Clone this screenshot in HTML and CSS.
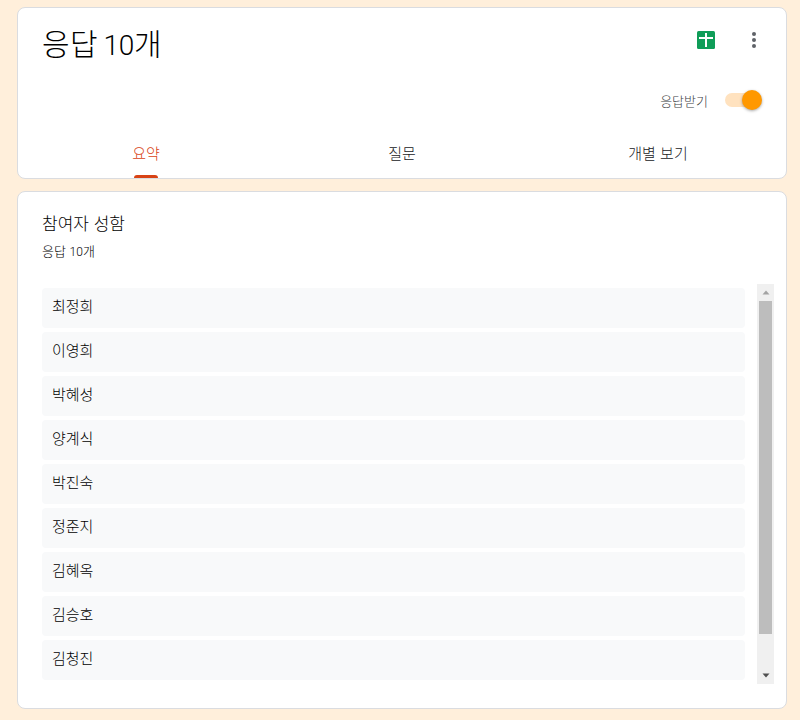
FILE: index.html
```html
<!DOCTYPE html>
<html lang="ko">
<head>
<meta charset="utf-8">
<title>응답</title>
<link rel="stylesheet" href="styles.css">
</head>
<body>
<main class="page">
  <section class="card head-card">
    <div class="head-top">
      <h1 class="title">응답 <span class="num">10</span>개</h1>
      <div class="actions">
        <svg class="sheet-icon" width="18" height="18" viewBox="0 0 18 18" aria-hidden="true">
          <rect width="18" height="18" rx="1.5" fill="#0f9d58"/>
          <rect x="2" y="6" width="14" height="2" fill="#fff"/>
          <rect x="8" y="2" width="2" height="14" fill="#fff"/>
        </svg>
        <svg class="more-icon" width="6" height="18" viewBox="0 0 6 18" aria-hidden="true">
          <circle cx="3" cy="3" r="2" fill="#5f6368"/>
          <circle cx="3" cy="9" r="2" fill="#5f6368"/>
          <circle cx="3" cy="15" r="2" fill="#5f6368"/>
        </svg>
      </div>
    </div>
    <div class="accept-row">
      <span class="accept-label">응답받기</span>
      <span class="switch"><span class="switch-knob"></span></span>
    </div>
    <nav class="tabs">
      <a class="tab tab-active">요약</a>
      <a class="tab">질문</a>
      <a class="tab">개별 보기</a>
    </nav>
  </section>
  <section class="card list-card">
    <h2 class="list-title">참여자 성함</h2>
    <p class="list-sub">응답 <span class="num">10</span>개</p>
    <div class="list-wrap">
      <ul class="names">
        <li class="name">최정희</li>
        <li class="name">이영희</li>
        <li class="name">박혜성</li>
        <li class="name">양계식</li>
        <li class="name">박진숙</li>
        <li class="name">정준지</li>
        <li class="name">김혜옥</li>
        <li class="name">김승호</li>
        <li class="name">김청진</li>
      </ul>
      <div class="scrollbar" aria-hidden="true">
        <div class="scroll-btn">
          <svg width="8" height="5" viewBox="0 0 8 5"><path d="M4 0.5L7.5 4.5H0.5z" fill="#a3a3a3"/></svg>
        </div>
        <div class="scroll-track"><div class="scroll-thumb"></div></div>
        <div class="scroll-btn">
          <svg width="8" height="5" viewBox="0 0 8 5"><path d="M4 4.5L7.5 0.5H0.5z" fill="#505050"/></svg>
        </div>
      </div>
    </div>
  </section>
</main>
</body>
</html>
```
FILE: styles.css
```css
* { box-sizing: border-box; }
html, body { margin: 0; height: 720px; overflow: hidden; }
body {
  background: #ffefdb;
  color: #000;
  font-family: "Noto Sans CJK KR", Roboto, sans-serif;
  font-weight: 300;
}
.num { font-family: Roboto, sans-serif; font-weight: 300; }
.page {
  display: flex;
  flex-direction: column;
  gap: 12px;
  padding: 7px 13px 0 17px;
}
.card {
  background: #fff;
  border: 1px solid #dadce0;
  border-radius: 8px;
}
.head-card {
  height: 172px;
  display: flex;
  flex-direction: column;
  overflow: hidden;
}
.head-top {
  display: flex;
  justify-content: space-between;
  padding: 14px 29px 0 24px;
  height: 78px;
}
.title {
  margin: 0;
  font-size: 30px;
  line-height: 40px;
  font-weight: 300;
  letter-spacing: .3px;
  word-spacing: -3px;
}
.title .num { font-size: 28px; letter-spacing: -.3px; }
.actions {
  display: flex;
  align-items: flex-start;
  gap: 36px;
  padding-top: 9px;
}
.accept-row {
  display: flex;
  align-items: center;
  justify-content: flex-end;
  gap: 17px;
  height: 28px;
  padding-right: 27px;
}
.accept-label {
  font-size: 13px;
  color: #3c4043;
}
.switch {
  position: relative;
  display: block;
  width: 34px;
  height: 14px;
  border-radius: 7px;
  background: #ffe2bf;
}
.switch-knob {
  position: absolute;
  top: -3px;
  right: -3px;
  width: 20px;
  height: 20px;
  border-radius: 50%;
  background: #ff9800;
  box-shadow: 0 1px 3px rgba(0,0,0,.35);
}
.tabs {
  display: grid;
  grid-template-columns: repeat(3, 1fr);
  margin-top: auto;
  height: 50px;
}
.tab {
  position: relative;
  text-align: center;
  font-size: 15px;
  line-height: 20px;
  padding-top: 15px;
  color: #202124;
}
.tab-active { color: #d84315; }
.tab-active::after {
  content: "";
  position: absolute;
  left: 50%;
  bottom: 0;
  width: 24px;
  height: 3px;
  margin-left: -12px;
  border-radius: 3px 3px 0 0;
  background: #d84315;
}
.list-card {
  height: 518px;
  padding: 19px 12px 0 24px;
}
.list-title {
  margin: 0;
  font-size: 17px;
  line-height: 24px;
  font-weight: 300;
}
.list-sub {
  margin: 7px 0 0;
  font-size: 13px;
  line-height: 18px;
}
.list-sub .num { font-size: 12px; }
.list-wrap {
  display: flex;
  gap: 12px;
  margin-top: 23px;
  height: 400px;
}
.names {
  flex: 1;
  list-style: none;
  margin: 0;
  padding: 0;
  overflow: hidden;
}
.name {
  display: flex;
  align-items: center;
  height: 40px;
  margin-top: 4px;
  padding: 0 0 5px 10px;
  font-size: 15px;
  background: #f8f9fa;
  border-radius: 4px;
}
.scrollbar {
  width: 17px;
  display: flex;
  flex-direction: column;
  background: #f0f0f0;
}
.scroll-btn {
  height: 17px;
  flex: none;
  display: flex;
  align-items: center;
  justify-content: center;
}
.scroll-track {
  flex: 1;
  padding: 0 2px;
}
.scroll-thumb {
  height: 333px;
  background: #bdbdbd;
}
```
